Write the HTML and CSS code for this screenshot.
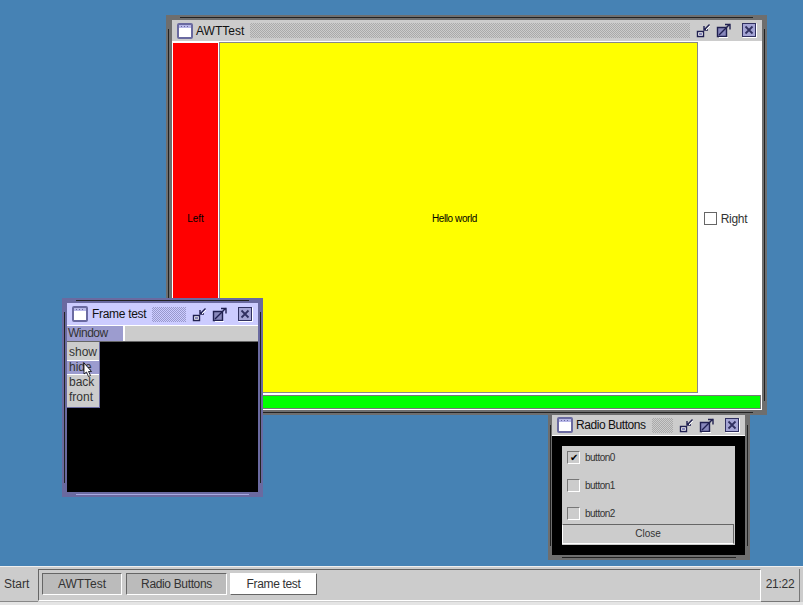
FILE: index.html
```html
<!DOCTYPE html>
<html lang="en">
<head>
  <meta charset="UTF-8" />
  <title>AWTTest</title>
  <link rel="stylesheet" href="styles.css">
</head>
<body>
  <svg class="defs" width="0" height="0">
    <symbol id="ico-app" viewBox="0 0 16 16">
      <rect x="1" y="1" width="14" height="14" rx="1" fill="#fff" stroke="#6a6aa0" stroke-width="2"/>
      <rect x="2" y="2" width="12" height="3" fill="#b8b8e8"/>
      <path d="M4 3.500h1M7 3.500h1M10 3.500h1" stroke="#6a6aa0"/>
    </symbol>
    <symbol id="ico-min" viewBox="0 0 15 15">
      <path d="M1.500 8.500h6v5h-6z" fill="#fff" stroke="#202050" stroke-width="1.400"/>
      <path d="M3 10h3v2h-3z" fill="#8888bb"/>
      <path d="M13.500 1.500l-5 5M8 3v4h4" fill="none" stroke="#202050" stroke-width="1.400"/>
      <path d="M14 3l-4 4" stroke="#fff"/>
    </symbol>
    <symbol id="ico-max" viewBox="0 0 15 15">
      <path d="M1.500 4.500h9v9h-9z" fill="#8888bb" stroke="#202050" stroke-width="1.400"/>
      <path d="M3 12l11-11M9 1.500h5v5" fill="none" stroke="#202050" stroke-width="1.400"/>
      <path d="M3 14.500h9" stroke="#fff"/>
    </symbol>
    <symbol id="ico-close" viewBox="0 0 15 15">
      <rect x=".5" y=".5" width="13" height="13" fill="#a4a4d4" stroke="#303060"/>
      <path d="M.5 14.500h14v-14" fill="none" stroke="#fff"/>
      <path d="M3.500 3.500l7 7M10.500 3.500l-7 7" stroke="#303060" stroke-width="1.800"/>
    </symbol>
  </svg>

  <div class="window win-radio">
    <div class="frame-in">
      <div class="titlebar">
        <svg class="ico-app"><use href="#ico-app"/></svg>
        <span class="title">Radio Buttons</span>
        <div class="dots"></div>
        <svg class="ico-btn"><use href="#ico-min"/></svg>
        <svg class="ico-btn"><use href="#ico-max"/></svg>
        <svg class="ico-close"><use href="#ico-close"/></svg>
      </div>
      <div class="radio-body">
        <div class="radio-panel">
          <div class="check-row"><span class="box">&#10004;</span>button0</div>
          <div class="check-row"><span class="box"></span>button1</div>
          <div class="check-row"><span class="box"></span>button2</div>
          <div class="close-btn">Close</div>
        </div>
      </div>
    </div>
  </div>

  <div class="window win-awt">
    <div class="frame-in">
      <div class="titlebar">
        <svg class="ico-app"><use href="#ico-app"/></svg>
        <span class="title">AWTTest</span>
        <div class="dots"></div>
        <svg class="ico-btn"><use href="#ico-min"/></svg>
        <svg class="ico-btn"><use href="#ico-max"/></svg>
        <svg class="ico-close"><use href="#ico-close"/></svg>
      </div>
      <div class="awt-body">
        <div class="awt-main">
          <div class="pane-left">Left</div>
          <div class="pane-center">Hello world</div>
          <div class="pane-right"><span class="box box-white"></span>Right</div>
        </div>
        <div class="pane-bottom"></div>
      </div>
    </div>
  </div>

  <div class="window win-frame">
    <div class="frame-in">
      <div class="titlebar">
        <svg class="ico-app"><use href="#ico-app"/></svg>
        <span class="title">Frame test</span>
        <div class="dots"></div>
        <svg class="ico-btn"><use href="#ico-min"/></svg>
        <svg class="ico-btn"><use href="#ico-max"/></svg>
        <svg class="ico-close"><use href="#ico-close"/></svg>
      </div>
      <div class="menubar"><div class="menu-item">Window</div></div>
      <div class="frame-body">
        <ul class="popup">
          <li>show</li>
          <li class="active">hide</li>
          <li>back</li>
          <li>front</li>
        </ul>
        <svg class="cursor" width="9" height="16" viewBox="0 0 9 16">
          <path d="M1 1v11l2.500-2 2 4.500 2-1-2-4h3z" fill="#fff" stroke="#000" stroke-width=".8"/>
        </svg>
      </div>
    </div>
  </div>

  <div class="taskbar">
    <div class="start">Start</div>
    <div class="tasks">
      <div class="task">AWTTest</div>
      <div class="task task-radio">Radio Buttons</div>
      <div class="task task-on">Frame test</div>
    </div>
    <div class="clock">21:22</div>
  </div>
</body>
</html>
```

FILE: styles.css
```css
html, body {
  margin: 0;
  height: 605px;
  overflow: hidden;
}

body {
  position: relative;
  background: #4682b4;
  font-family: 'Liberation Sans', Arial, sans-serif;
  font-size: 12px;
  color: #222;
}

.defs { position: absolute; }

/* windows */
.window {
  position: absolute;
  box-sizing: border-box;
  padding: 5px;
  background: #6e6e6e;
  display: flex;
}

/* the thin grooves running along the frame, stopping short of the corners */
.window::before, .window::after {
  content: "";
  position: absolute;
  pointer-events: none;
}

.window::before {
  inset: 2px 14px;
  border-top: 1px solid #222;
  border-bottom: 1px solid #222;
}

.window::after {
  inset: 14px 2px;
  border-left: 1px solid #222;
  border-right: 1px solid #222;
}

.frame-in {
  flex: 1;
  display: flex;
  flex-direction: column;
  min-width: 0;
}

.win-awt { left: 166px; top: 15px; width: 601px; height: 400px; padding-left: 6px; }
.win-frame { left: 62px; top: 298px; width: 201px; height: 199px; background: #6a6aa0; }
.win-radio { left: 548px; top: 411px; width: 202px; height: 149px; padding: 4px 5px 5px 4px; }

.win-frame::before { border-top-color: #222; border-bottom-color: #a8a8e0; }
.win-frame::after { border-left-color: #222; border-right-color: #222; }

.titlebar {
  height: 21px;
  flex: none;
  display: flex;
  align-items: center;
  background: #ccc;
  padding: 0 5px;
  border-bottom: 1px solid #fff;
}

.win-frame .titlebar { background: #ccccff; height: 22px; }
.win-radio .titlebar { height: 20px; }

.title {
  font-size: 12px;
  margin-left: 3px;
  white-space: nowrap;
  color: #111;
}

.win-radio .title { letter-spacing: -.45px; }
.win-frame .title { letter-spacing: -.3px; margin-left: 4px; }

.dots {
  flex: 1;
  height: 15px;
  margin: 0 6px;
  background: repeating-conic-gradient(#aaa 0 25%, transparent 0 50%) 0 0 / 2px 2px;
}

.win-frame .dots { background-image: repeating-conic-gradient(#9999cc 0 25%, transparent 0 50%); }

.ico-app { width: 16px; height: 16px; flex: none; }
.ico-btn { width: 15px; height: 15px; flex: none; margin-right: 5px; }
.ico-close { width: 15px; height: 15px; flex: none; margin-left: 6px; }

/* AWTTest */
.awt-body {
  flex: 1;
  display: flex;
  flex-direction: column;
  background: #fff;
  min-height: 0;
}

.awt-main {
  flex: 1;
  display: flex;
  min-height: 0;
}

.pane-left, .pane-center, .pane-right {
  display: flex;
  align-items: center;
  justify-content: center;
  font-size: 10px;
  color: #000;
}

.pane-left { width: 45px; background: #f00; border-right: 1px solid #fff; margin: 1px 0 0 1px; }
.pane-center { flex: 1; background: #ff0; border: 1px solid #888; padding: 2px 8px 0 0; letter-spacing: -.4px; }
.pane-right { width: 64px; box-sizing: border-box; padding: 2px 9px 0 0; background: #fff; font-size: 12px; color: #333; letter-spacing: -.3px; }

.pane-bottom {
  height: 12px;
  background: #0f0;
  border: 1px solid #777;
  margin: 2px 1px 1px;
}

/* Frame test */
.menubar {
  height: 16px;
  flex: none;
  box-sizing: border-box;
  background: #ccc;
  display: flex;
  border-bottom: 1px solid #666;
}

.menu-item {
  width: 55px;
  background: #9c9ccf;
  border-right: 2px solid #fff;
  padding-left: 1px;
  line-height: 15px;
  color: #333;
  letter-spacing: -.5px;
}

.frame-body {
  flex: 1;
  position: relative;
  background: #000;
}

.popup {
  position: absolute;
  left: 0;
  top: 0;
  width: 33px;
  margin: 0;
  padding: 3px 0 2px;
  list-style: none;
  background: #ccc;
  border-right: 1px solid #6a6aa0;
  border-bottom: 1px solid #6a6aa0;
  box-sizing: border-box;
}

.popup li {
  height: 15px;
  line-height: 15px;
  padding-left: 2px;
  color: #333;
}

.popup .active { background: #9c9ccf; border: solid #fff; border-width: 1px 0; height: 13px; line-height: 13px; }

.cursor { position: absolute; left: 16px; top: 20px; }

/* Radio Buttons */
.radio-body {
  flex: 1;
  background: #000;
  padding: 10px;
}

.radio-panel {
  background: #ccc;
  height: 99px;
  display: flex;
  flex-direction: column;
  box-sizing: border-box;
  padding-bottom: 1px;
}

.check-row {
  height: 28px;
  flex: none;
  box-sizing: border-box;
  display: flex;
  align-items: center;
  font-size: 10px;
  color: #333;
  gap: 5px;
  padding-left: 5px;
  letter-spacing: -.5px;
}

.check-row:first-child { height: 25px; padding-bottom: 3px; }

.box {
  width: 11px;
  height: 11px;
  display: flex;
  align-items: center;
  justify-content: center;
  border: 1px solid;
  border-color: #777 #fff #fff #777;
  font-size: 10px;
  color: #000;
  flex: none;
}

.box-white { border-color: #666; margin-right: 4px; }

.close-btn {
  height: 20px;
  flex: none;
  box-sizing: border-box;
  margin: -3px 1px 0 0;
  border: 1px solid;
  border-color: #666 #666 #fff #fff;
  text-align: center;
  line-height: 18px;
  font-size: 10px;
  color: #333;
}

/* taskbar */
.taskbar {
  position: absolute;
  left: 0;
  right: 0;
  top: 566px;
  height: 39px;
  box-sizing: border-box;
  display: flex;
  background: #ccc;
  border-top: 1px solid #eee;
  border-bottom: 3px solid #e4e4e4;
  padding: 2px 3px 0 0;
}

.start {
  width: 38px;
  line-height: 31px;
  padding-left: 4px;
  box-sizing: border-box;
  color: #333;
  border-bottom: 1px solid #888;
}

.tasks {
  flex: 1;
  display: flex;
  gap: 3px;
  padding: 3px;
  height: 32px;
  box-sizing: border-box;
  border: 1px solid;
  border-color: #666 #fff #fff #666;
}

.task {
  width: 80px;
  height: 22px;
  line-height: 20px;
  box-sizing: border-box;
  text-align: center;
  background: #bbb;
  border: 1px solid;
  border-color: #666 #fff #fff #666;
  color: #333;
}

.task-radio { width: 101px; margin-left: 1px; letter-spacing: -.35px; }
.task-on { width: 87px; background: #fff; border-color: #fff #666 #666 #fff; letter-spacing: -.35px; }

.clock {
  width: 38px;
  text-align: center;
  line-height: 31px;
  border-right: 1px solid #777;
  border-bottom: 1px solid #777;
  color: #333;
  letter-spacing: -.3px;
}
```
